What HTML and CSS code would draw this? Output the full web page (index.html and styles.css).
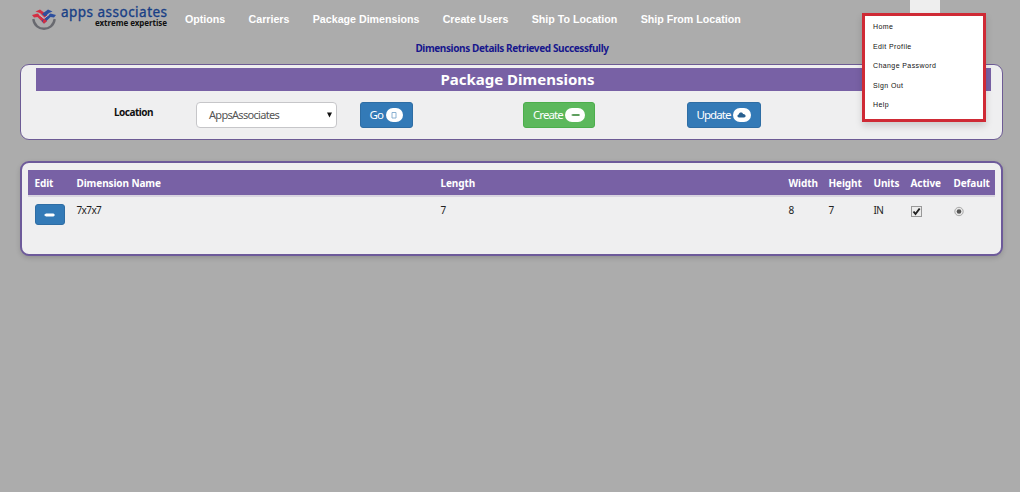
FILE: index.html
```html
<!DOCTYPE html>
<html lang="en">
<head>
<meta charset="utf-8">
<title>Package Dimensions</title>
<link rel="stylesheet" href="styles.css">
</head>
<body>
<header class="topbar">
  <div class="brand">
    <svg class="brand-mark" viewBox="0 0 24 22" aria-hidden="true">
      <path d="M1.300 11C3 24 21 24 22.700 11" fill="none" stroke="#68696f" stroke-width="2.300"/>
      <path d="M3.500 3.500L8 1.500L12 4.500L16 8L13 10L8 5Z" fill="#d32f43"/>
      <path d="M0 7L5.500 5.500L15 13L12 15.500L5.500 9L2 9.500Z" fill="#d32f43"/>
      <path d="M20.500 3.500L16 1.500L10 6L13 8.500L17 5Z" fill="#2d4f9e"/>
      <path d="M24 7L18.500 5.500L9.500 13L12 15.500L18.500 9L22 9.500Z" fill="#2d4f9e"/>
      <path d="M7 6.500L12 10.500L17 6.500" fill="none" stroke="#c9bfcb" stroke-width=".9"/>
      <path d="M12 10.500L15 13L12 15.500L10.500 14Z" fill="#d32f43"/>
    </svg>
    <div class="brand-text">
      <span class="brand-name">apps associates</span>
      <span class="brand-tag">extreme expertise</span>
    </div>
  </div>
  <nav class="nav">
    <a>Options</a><a>Carriers</a><a>Package Dimensions</a><a>Create Users</a><a>Ship To Location</a><a>Ship From Location</a>
  </nav>
  <div class="account">
    <ul class="menu"><li>Home</li><li>Edit Profile</li><li>Change Password</li><li>Sign Out</li><li>Help</li></ul>
  </div>
</header>
<main>
  <p class="message"><span>Dimensions Details Retrieved Successfully</span></p>
  <section class="panel filter">
    <h1><span>Package Dimensions</span></h1>
    <div class="controls">
      <label>Location</label>
      <div class="select"><span>AppsAssociates</span><svg width="5" height="6" viewBox="0 0 6 6"><path d="M0 0H6L3 6Z" fill="#111"/></svg></div>
      <button class="btn go"><span>Go</span><i class="badge"><svg width="6" height="8" viewBox="0 0 6 8"><path d="M1 1.500H5V7H1Z" fill="none" stroke="#7fa9cd" stroke-width=".9"/></svg></i></button>
      <button class="btn create"><span>Create</span><i class="badge"><svg width="9" height="4" viewBox="0 0 10 4"><path d="M0 2L2 1H9L10 2L9 3H2Z" fill="#5f9f5f"/></svg></i></button>
      <button class="btn update"><span>Update</span><i class="badge"><svg width="9" height="6" viewBox="0 0 9 6"><path d="M2 5.500C0 5.500 0 2.800 1.700 2.600C2 0 5.500 0 6 2C9 1.700 9.500 5.500 7 5.500Z" fill="#286090"/></svg></i></button>
    </div>
  </section>
  <section class="panel results">
    <table>
      <colgroup><col class="c1"><col class="c2"><col class="c3"><col class="c4"><col class="c5"><col class="c6"><col class="c7"><col class="c8"></colgroup>
      <thead><tr><th>Edit</th><th>Dimension Name</th><th>Length</th><th>Width</th><th>Height</th><th>Units</th><th>Active</th><th>Default</th></tr></thead>
      <tbody><tr>
        <td><button class="edit" aria-label="Edit"><svg width="11" height="4" viewBox="0 0 11 4"><path d="M0 2L2 .5H9.500L11 2L9.500 3.500H2Z" fill="#fff"/></svg></button></td>
        <td>7x7x7</td><td>7</td><td>8</td><td>7</td><td>IN</td>
        <td><svg class="mark" width="11" height="11" viewBox="0 0 11 11"><rect x=".5" y=".5" width="10" height="10" fill="#ececec" stroke="#999"/><path d="M2.500 5.500L4.500 8L8.700 2.500" fill="none" stroke="#222" stroke-width="2"/></svg></td>
        <td><svg class="mark" width="10" height="11" viewBox="0 0 10 11"><circle cx="5" cy="5.500" r="4.200" fill="#e8e8e8" stroke="#999" stroke-width=".8"/><circle cx="5" cy="5.500" r="2.300" fill="#555"/></svg></td>
      </tr></tbody>
    </table>
  </section>
</main>
</body>
</html>
```
FILE: styles.css
```css
* { box-sizing: border-box; }
body { margin: 0; height: 492px; overflow: hidden; background: #acacac; font: 10px/14px "Noto Sans", "Open Sans", sans-serif; color: #222; }
.topbar { display: flex; height: 38px; }
.brand { display: flex; width: 185px; padding: 8px 0 0 32px; }
.brand-mark { width: 24px; height: 22px; flex: none; }
.brand-text { width: 106px; margin: -2px 0 0 5px; display: flex; flex-direction: column; white-space: nowrap; }
.brand-name { font: 13.500px/13px "Noto Sans", sans-serif; letter-spacing: .48px; color: #183f86; -webkit-text-stroke: .35px #183f86; }
.brand-tag { font: bold 8px/8px "Noto Sans", sans-serif; letter-spacing: -.05px; color: #111; text-align: right; }
.nav { display: flex; gap: 23.300px; padding-top: 12px; font: bold 10.670px/14px "Liberation Sans", Arial, sans-serif; color: #fff; white-space: nowrap; }
.account { width: 30px; height: 14px; margin-left: auto; margin-right: 80px; background: #eee; position: relative; }
.menu { position: absolute; z-index: 2; left: -48px; top: 13px; width: 124px; height: 109px; margin: 0; padding: 1px 0 0 8px; list-style: none; background: #fff; border: 3px solid #cf2a35; box-shadow: 0 4px 7px rgba(0,0,0,.15); font: 7px/19.500px "Liberation Sans", Arial, sans-serif; letter-spacing: .4px; color: #111; }
.message { margin: 0; padding: 3px 0 0 4px; height: 26px; text-align: center; font-weight: bold; letter-spacing: -.39px; color: #17178c; }
.panel { margin: 0 17px 0 20px; background: #efeff0; border: 1px solid #6d5b95; border-radius: 9px; }
.filter { height: 76px; padding: 3px 11px 0 15px; }
h1 { margin: 0; height: 23px; padding-left: 8px; background: #7861a5; color: #fff; font-size: 15px; line-height: 22px; text-align: center; }
.controls { display: grid; grid-template-columns: 82px 163.500px 163.500px 163.500px 1fr; padding-top: 11px; padding-left: 78px; justify-items: start; }
label { font-weight: bold; font-size: 10px; line-height: 20px; letter-spacing: -.5px; color: #111; }
.select { width: 141px; height: 26px; border: 1px solid #c6c6c9; border-radius: 4px; background: #fff; display: flex; align-items: center; justify-content: space-between; padding: 0 4px 0 12px; color: #555; font-size: 11px; letter-spacing: -.7px; }
.btn { height: 26px; border: 1px solid; border-radius: 3px; padding: 0 9px; display: flex; align-items: center; justify-content: space-between; color: #fff; font: 11.500px/16px "Noto Sans", sans-serif; letter-spacing: -.95px; white-space: nowrap; }
.go { width: 53px; background: #337ab7; border-color: #2e6da4; }
.create { width: 72px; background: #5cb85c; border-color: #4cae4c; }
.update { width: 74px; background: #337ab7; border-color: #2e6da4; }
.badge { display: flex; align-items: center; justify-content: center; width: 17px; height: 14px; border-radius: 8px; background: #fff; flex: none; }
.create .badge { width: 20px; }
.update .badge { width: 18px; }
.results { margin-top: 21px; height: 95px; padding: 7px 6px 0 6px; border-width: 2px; border-color: #6d5a9a; box-shadow: 0 2px 5px rgba(0,0,0,.15); }
table { width: 967px; border-collapse: collapse; table-layout: fixed; }
.c1 { width: 42px; } .c2 { width: 364px; } .c3 { width: 348px; } .c4 { width: 40px; } .c5 { width: 45px; } .c6 { width: 37px; } .c7 { width: 43px; } .c8 { width: 48px; }
th { height: 26px; padding: 1px 0 0 6.500px; text-align: left; background: #7861a5; color: #fff; font-weight: bold; letter-spacing: -.1px; white-space: nowrap; }
thead { border-bottom: 2px solid #d9d5e0; }
td { padding: 6px 0 0 6.500px; vertical-align: top; letter-spacing: -.6px; }
.edit { display: flex; align-items: center; justify-content: center; width: 30px; height: 21px; margin-top: 1px; padding: 0; border: 1px solid #2e6da4; border-radius: 3px; background: #337ab7; }
.mark { display: block; margin-top: 3px; }
```
